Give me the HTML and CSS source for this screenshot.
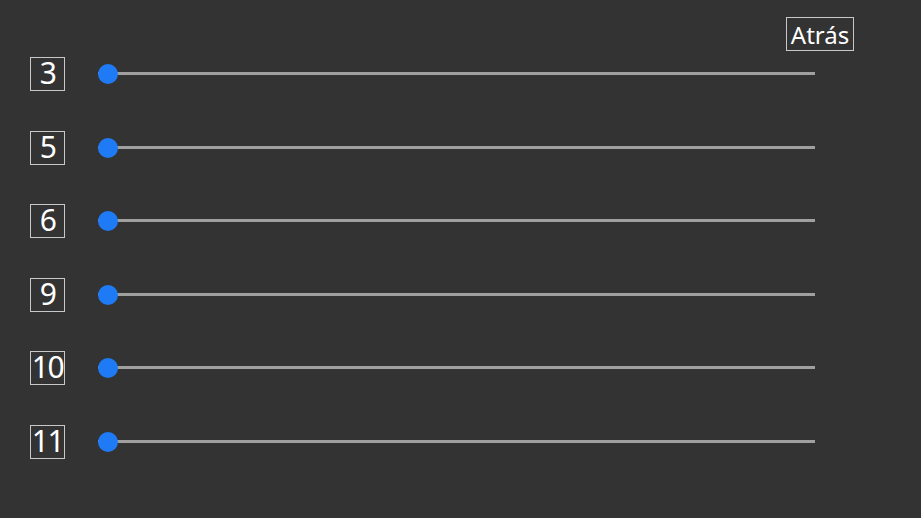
FILE: index.html
```html
<!DOCTYPE html>
<html lang="es">
<head>
<meta charset="utf-8">
<title>Sliders</title>
<link rel="stylesheet" href="styles.css">
</head>
<body>
<div class="page">
  <div class="header">
    <button class="back">Atrás</button>
  </div>
  <div class="list">
    <div class="row"><div class="label">3</div><div class="slider"><div class="track"></div><div class="thumb"></div></div></div>
    <div class="row"><div class="label">5</div><div class="slider"><div class="track"></div><div class="thumb"></div></div></div>
    <div class="row"><div class="label">6</div><div class="slider"><div class="track"></div><div class="thumb"></div></div></div>
    <div class="row"><div class="label">9</div><div class="slider"><div class="track"></div><div class="thumb"></div></div></div>
    <div class="row"><div class="label">10</div><div class="slider"><div class="track"></div><div class="thumb"></div></div></div>
    <div class="row"><div class="label">11</div><div class="slider"><div class="track"></div><div class="thumb"></div></div></div>
  </div>
</div>
</body>
</html>
```
FILE: styles.css
```css
html, body {
  margin: 0;
  padding: 0;
  background: #333333;
  width: 921px;
  height: 518px;
  overflow: hidden;
}
.page {
  font-family: "Noto Sans", "Open Sans", sans-serif;
  color: #ffffff;
  padding: 17px 0 0 30px;
}
.header {
  display: flex;
  justify-content: flex-end;
  padding-right: 67px;
  height: 34px;
}
.back {
  box-sizing: border-box;
  font-family: inherit;
  font-size: 24px;
  color: #ffffff;
  background: transparent;
  border: 1px solid #c8c8c8;
  padding: 0;
  width: 68px;
  height: 34px;
  line-height: 31px;
  text-align: center;
  margin: 0;
}
.list {
  margin-top: 6px;
  display: flex;
  flex-direction: column;
  gap: 39.6px;
}
.row {
  display: flex;
  align-items: center;
  height: 34px;
}
.label {
  box-sizing: border-box;
  width: 35px;
  height: 34px;
  border: 1px solid #c8c8c8;
  font-size: 30px;
  line-height: 30px;
  letter-spacing: -1.5px;
  text-align: center;
  white-space: nowrap;
  display: flex;
  justify-content: center;
}
.slider {
  position: relative;
  margin-left: 33px;
  width: 717px;
  height: 20px;
}
.track {
  position: absolute;
  left: 0;
  right: 0;
  top: 8px;
  height: 3px;
  background: #a0a0a0;
}
.thumb {
  position: absolute;
  left: 0;
  top: 0;
  width: 20px;
  height: 20px;
  border-radius: 50%;
  background: #1f7bf5;
}
```
